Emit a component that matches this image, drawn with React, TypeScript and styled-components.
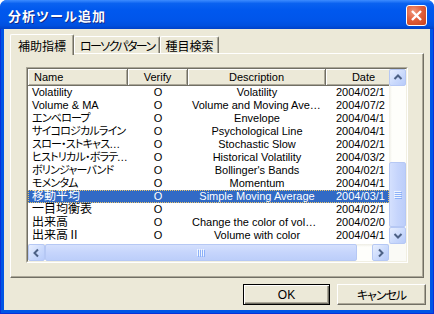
import styled, { createGlobalStyle } from "styled-components";

const GlobalStyle = createGlobalStyle`
  html, body {
    margin: 0;
    padding: 0;
    background: #ffffff;
  }
  body {
    font-family: "Liberation Sans", "Noto Sans CJK JP", sans-serif;
  }
`;

type Script = "latin" | "kana" | "kanji";
type Row = [string, string, string, string];

// dates are cut by the list's edge in the original, only the visible part is kept
const rows: Row[] = [
    ["Volatility", "O", "Volatility", "2004/02/1"],
    ["Volume & MA", "O", "Volume and Moving Average", "2004/07/2"],
    ["エンベロープ", "O", "Envelope", "2004/04/1"],
    ["サイコロジカルライン", "O", "Psychological Line", "2004/04/1"],
    ["スロー・ストキャスティクス", "O", "Stochastic Slow", "2004/02/1"],
    ["ヒストリカル・ボラティリティ", "O", "Historical Volatility", "2004/03/2"],
    ["ボリンジャーバンド", "O", "Bollinger's Bands", "2004/02/1"],
    ["モメンタム", "O", "Momentum", "2004/04/1"],
    ["移動平均", "O", "Simple Moving Average", "2004/03/1"],
    ["一目均衡表", "O", "", "2004/02/1"],
    ["出来高", "O", "Change the color of volume", "2004/02/0"],
    ["出来高Ⅱ", "O", "Volume with color", "2004/04/1"],
];

const SELECTED = 8;
const COLS = "100px 60px 138px 76px";

// katakana reads narrow in the original UI font, kanji full size
const scriptOf = (s: string): Script => {
    if (/[\u30A0-\u30FF]/.test(s)) return "kana";
    if (/[\u4E00-\u9FFF]/.test(s)) return "kanji";
    return "latin";
};

const Arrow = ({ dir }: { dir: "up" | "down" | "left" | "right" }) => {
    const pts = {
        up: "1.5,6 5,2.5 8.5,6",
        down: "1.5,3 5,6.5 8.5,3",
        left: "6,1.5 2.5,5 6,8.5",
        right: "3,1.5 6.5,5 3,8.5",
    }[dir];
    return (
        <svg width="10" height="10" viewBox="0 0 10 10">
            <polyline points={pts} fill="none" stroke="#4D6185" strokeWidth="2" />
        </svg>
    );
};

const Grip = ({ vertical }: { vertical?: boolean }) => (
    <svg width="8" height="8" viewBox="0 0 8 8">
        {[0, 2, 4, 6].map((o) =>
            vertical ? (
                <g key={o}>
                    <rect x="0" y={o} width="7" height="1" fill="#EEF4FE" />
                    <rect x="1" y={o + 1} width="7" height="1" fill="#8CB0F8" />
                </g>
            ) : (
                <g key={o}>
                    <rect x={o} y="0" width="1" height="7" fill="#EEF4FE" />
                    <rect x={o + 1} y="1" width="1" height="7" fill="#8CB0F8" />
                </g>
            )
        )}
    </svg>
);

const App = () => {
    return (
        <>
            <GlobalStyle />
            <Window>
                <TitleBar>
                    <Title>分析ツール追加</Title>
                    <CloseButton>
                        <svg width="13" height="13" viewBox="0 0 13 13">
                            <path d="M2 2 L11 11 M11 2 L2 11" stroke="#fff" strokeWidth="2.4" />
                        </svg>
                    </CloseButton>
                </TitleBar>
                <Frame>
                    <Client>
                        <TabRow>
                            <Tab $active>補助指標</Tab>
                            <Tab $kana>ローソクパターン</Tab>
                            <Tab>種目検索</Tab>
                        </TabRow>
                        <Panel>
                            <ListOuter>
                                <ListGrid>
                                    <Viewport>
                                        <HeaderRow>
                                            <HeaderCell $align="left">Name</HeaderCell>
                                            <HeaderCell>Verify</HeaderCell>
                                            <HeaderCell>Description</HeaderCell>
                                            <HeaderCell>Date</HeaderCell>
                                        </HeaderRow>
                                        {rows.map((r, i) => (
                                            <DataRow key={i} $selected={i === SELECTED}>
                                                <Cell $align="left" $script={scriptOf(r[0])}>
                                                    {r[0]}
                                                </Cell>
                                                <Cell>{r[1]}</Cell>
                                                <Cell>{r[2]}</Cell>
                                                <Cell $clip>{r[3]}</Cell>
                                            </DataRow>
                                        ))}
                                    </Viewport>
                                    <VScroll>
                                        <ScrollButton>
                                            <Arrow dir="up" />
                                        </ScrollButton>
                                        <Track />
                                        <Thumb $length={65}>
                                            <Grip vertical />
                                        </Thumb>
                                        <ScrollButton>
                                            <Arrow dir="down" />
                                        </ScrollButton>
                                    </VScroll>
                                    <HScroll>
                                        <ScrollButton>
                                            <Arrow dir="left" />
                                        </ScrollButton>
                                        <Thumb $length={312} $horizontal>
                                            <Grip />
                                        </Thumb>
                                        <Track />
                                        <ScrollButton>
                                            <Arrow dir="right" />
                                        </ScrollButton>
                                    </HScroll>
                                    <Corner />
                                </ListGrid>
                            </ListOuter>
                        </Panel>
                        <ButtonRow>
                            <Button $default $w={87}>OK</Button>
                            <Button $w={89} $kana>キャンセル</Button>
                        </ButtonRow>
                    </Client>
                </Frame>
            </Window>
        </>
    );
};

const Window = styled.div`
    width: 434px;
    height: 314px;
    display: flex;
    flex-direction: column;
    border-radius: 7px 7px 0 0;
    overflow: hidden;
    background: #0054e3;
`;

const TitleBar = styled.div`
    height: 29px;
    flex-shrink: 0;
    display: flex;
    align-items: center;
    justify-content: space-between;
    padding: 0 7px 0 8px;
    background: linear-gradient(
        180deg,
        #3d8cff 0%,
        #0a62f0 12%,
        #0058ee 35%,
        #0055ea 70%,
        #0050df 88%,
        #0041c8 100%
    );
`;

const Title = styled.div`
    color: #ffffff;
    font-family: "Noto Sans CJK JP", sans-serif;
    font-weight: bold;
    font-size: 13px;
    line-height: 15px;
    letter-spacing: 1px;
    margin-top: 1px;
    text-shadow: 1px 1px 0 #0f2a8c;
`;

const CloseButton = styled.div`
    width: 21px;
    height: 21px;
    box-sizing: border-box;
    border: 1px solid #ffffff;
    border-radius: 3px;
    display: flex;
    align-items: center;
    justify-content: center;
    margin-top: 2px;
    background: radial-gradient(circle at 35% 30%, #f09a7e 0%, #e2603c 45%, #c8401c 100%);
`;

const Frame = styled.div`
    flex: 1;
    display: flex;
    padding: 0 4px 4px 4px;
    background: #0055e5;
    box-shadow: inset 1px 0 #0831d9, inset -1px 0 #0831d9, inset 0 -1px #0831d9;
`;

const Client = styled.div`
    flex: 1;
    display: flex;
    flex-direction: column;
    background: #ece9d8;
    padding: 5px 6px 5px 6px;
`;

const TabRow = styled.div`
    height: 20px;
    display: flex;
    align-items: flex-end;
    position: relative;
    z-index: 1;
    margin-bottom: -1px;
`;

const Tab = styled.div<{ $active?: boolean; $kana?: boolean }>`
    box-sizing: border-box;
    height: ${({ $active }) => ($active ? "21px" : "17px")};
    margin-bottom: ${({ $active }) => ($active ? "-1px" : "1px")};
    padding: ${({ $active }) => ($active ? "1px 7px 0 7px" : "1px 4px 0 5px")};
    display: flex;
    align-items: center;
    font-family: "Noto Sans CJK JP", sans-serif;
    font-feature-settings: "palt";
    font-size: 12px;
    line-height: 14px;
    letter-spacing: ${({ $kana }) => ($kana ? "-1.6px" : "0")};
    color: #000;
    background: #ece9d8;
    border-top: 1px solid #ffffff;
    border-left: 1px solid #ffffff;
    border-right: 1px solid #716f64;
    border-radius: 2px 2px 0 0;
    box-shadow: inset -1px 0 #aca899;
`;

const Panel = styled.div`
    height: 225px;
    box-sizing: border-box;
    display: flex;
    padding: 13px 15px 14px 15px;
    border: 1px solid;
    border-color: #ffffff #716f64 #716f64 #ffffff;
    box-shadow: inset -1px -1px #aca899;
`;

const ListOuter = styled.div`
    flex: 1;
    display: flex;
    border: 1px solid;
    border-color: #aca899 #ffffff #ffffff #aca899;
`;

const ListGrid = styled.div`
    flex: 1;
    display: grid;
    grid-template-columns: 1fr 17px;
    grid-template-rows: 1fr 17px;
    border: 1px solid;
    border-color: #716f64 #f1efe2 #f1efe2 #716f64;
    background: #ffffff;
`;

const Viewport = styled.div`
    overflow: hidden;
    background: #ffffff;
    font-size: 11px;
    font-feature-settings: "palt";
`;

const HeaderRow = styled.div`
    display: grid;
    grid-template-columns: ${COLS};
    height: 17px;
    width: max-content;
`;

const HeaderCell = styled.div<{ $align?: "left" | "center" }>`
    box-sizing: border-box;
    height: 17px;
    line-height: 16px;
    padding: 0 6px;
    text-align: ${({ $align }) => $align || "center"};
    white-space: nowrap;
    overflow: hidden;
    background: #ece9d8;
    border-right: 1px solid #716f64;
    border-bottom: 1px solid #716f64;
    box-shadow: inset 1px 1px #ffffff, inset -1px -1px #aca899;
    color: #000;
`;

const DataRow = styled.div<{ $selected?: boolean }>`
    display: grid;
    grid-template-columns: ${COLS};
    height: 13px;
    line-height: 13px;
    box-sizing: border-box;
    color: ${({ $selected }) => ($selected ? "#ffffff" : "#000000")};
    background: ${({ $selected }) => ($selected ? "#316ac5" : "transparent")};
    outline: ${({ $selected }) => ($selected ? "1px dotted #e8c46a" : "none")};
    outline-offset: -1px;
`;

const Cell = styled.div<{ $align?: "left" | "center"; $clip?: boolean; $script?: Script }>`
    padding: ${({ $align, $clip }) =>
        $align === "left" ? "0 0 0 4px" : $clip ? "0 0 0 10px" : "0 4px"};
    text-align: ${({ $align, $clip }) => ($align === "left" || $clip ? "left" : "center")};
    white-space: nowrap;
    overflow: hidden;
    text-overflow: ${({ $clip }) => ($clip ? "clip" : "ellipsis")};
    font-size: ${({ $script }) => ($script === "kanji" ? "12px" : "11px")};
    letter-spacing: ${({ $script }) => ($script === "kana" ? "-0.8px" : "0")};
`;

const VScroll = styled.div`
    display: flex;
    flex-direction: column;
    background: linear-gradient(90deg, #eeede5 0, #fefefb 3px);
`;

const HScroll = styled.div`
    display: flex;
    background: linear-gradient(180deg, #eeede5 0, #fefefb 3px);
`;

const Track = styled.div`
    flex: 1;
`;

const ScrollButton = styled.div`
    width: 17px;
    height: 17px;
    flex-shrink: 0;
    box-sizing: border-box;
    display: flex;
    align-items: center;
    justify-content: center;
    border: 1px solid #b6c8f4;
    border-radius: 2px;
    background: linear-gradient(135deg, #e8effe 0%, #c8d8fc 60%, #b8cbfa 100%);
`;

const Thumb = styled.div<{ $length: number; $horizontal?: boolean }>`
    flex-shrink: 0;
    box-sizing: border-box;
    width: ${({ $horizontal, $length }) => ($horizontal ? `${$length}px` : "17px")};
    height: ${({ $horizontal, $length }) => ($horizontal ? "17px" : `${$length}px`)};
    display: flex;
    align-items: center;
    justify-content: center;
    border: 1px solid #b6c8f4;
    border-radius: 2px;
    background: ${({ $horizontal }) =>
        $horizontal
            ? "linear-gradient(180deg, #d4e0fd 0%, #c6d5fc 50%, #bccefa 100%)"
            : "linear-gradient(90deg, #d4e0fd 0%, #c6d5fc 50%, #bccefa 100%)"};
`;

const Corner = styled.div`
    background: #fafaf6;
`;

const ButtonRow = styled.div`
    display: flex;
    justify-content: flex-end;
    gap: 7px;
    margin-top: 6px;
    margin-right: -2px;
`;

const Button = styled.div<{ $default?: boolean; $w: number; $kana?: boolean }>`
    width: ${({ $w }) => $w}px;
    height: 21px;
    box-sizing: border-box;
    display: flex;
    align-items: center;
    justify-content: center;
    font-family: "Liberation Sans", "Noto Sans CJK JP", sans-serif;
    font-feature-settings: "palt";
    font-size: 12px;
    letter-spacing: ${({ $kana }) => ($kana ? "-1px" : "0")};
    color: #000;
    background: #ece9d8;
    border: 1px solid;
    border-color: ${({ $default }) =>
        $default ? "#000000" : "#ffffff #716f64 #716f64 #ffffff"};
    box-shadow: ${({ $default }) =>
        $default
            ? "inset 1px 1px #ffffff, inset -1px -1px #716f64, inset -2px -2px #aca899"
            : "inset -1px -1px #aca899"};
`;

export default App;
